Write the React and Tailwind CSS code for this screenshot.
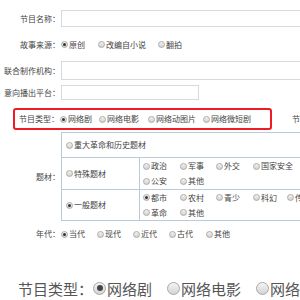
import React from "react";

function Radio({ checked, big }) {
  if (big) {
    return (
      <span className="inline-flex items-center justify-center w-[13px] h-[13px] rounded-full border border-[#a8a8a8] bg-gradient-to-b from-[#f4f4f4] to-[#d4d4d4] shrink-0">
        {checked && <span className="w-[6px] h-[6px] rounded-full bg-[#444]" />}
      </span>
    );
  }
  return (
    <span className="inline-flex items-center justify-center w-[7px] h-[7px] rounded-full border border-[#aaa] bg-gradient-to-b from-[#f2f2f2] to-[#d2d2d2] shrink-0">
      {checked && <span className="w-[3px] h-[3px] rounded-full bg-[#333]" />}
    </span>
  );
}

function Opt({ label, checked, w }) {
  return (
    <div className={`flex items-center gap-[1px] shrink-0 ${w}`}>
      <Radio checked={checked} />
      <span>{label}</span>
    </div>
  );
}

export default function App() {
  return (
    <div
      className="w-[300px] h-[300px] overflow-hidden bg-white text-[8px] leading-none text-[#444]"
      style={{ fontFamily: '"Noto Sans CJK SC", "Noto Sans", sans-serif' }}
    >
      {/* 节目名称 */}
      <div className="flex items-center mt-[10px] h-[17px]">
        <div className="w-[61px] shrink-0 text-right pr-[1px]">节目名称：</div>
        <div className="w-[260px] h-[17px] shrink-0 border border-[#d6dadf] bg-white" />
      </div>

      {/* 故事来源 */}
      <div className="flex items-center mt-[9px] h-[17px]">
        <div className="w-[61px] shrink-0 text-right pr-[1px]">故事来源：</div>
        <Opt label="原创" checked w="w-[37px]" />
        <Opt label="改编自小说" w="w-[60px]" />
        <Opt label="翻拍" w="w-[30px]" />
      </div>

      {/* 联合制作机构 */}
      <div className="flex items-center mt-[8px] h-[19px]">
        <div className="w-[61px] shrink-0 text-right pr-[1px]">联合制作机构：</div>
        <div className="w-[260px] h-[19px] shrink-0 border border-[#d6dadf] bg-white" />
      </div>

      {/* 意向播出平台 */}
      <div className="flex items-center mt-[5px] h-[15px]">
        <div className="w-[61px] shrink-0 text-right pr-[1px]">意向播出平台：</div>
        <div className="w-[138px] h-[15px] shrink-0 border border-[#d6dadf] bg-white" />
      </div>

      {/* 节目类型 (highlighted) */}
      <div className="flex items-center mt-[8px] h-[22px]">
        <div className="ml-[13px] w-[259px] h-[22px] shrink-0 flex items-center border-[2.5px] border-[#ee1c24] rounded-[3px]">
          <div className="w-[45px] shrink-0 text-right pr-[1px]">节目类型：</div>
          <Opt label="网络剧" checked w="w-[39px]" />
          <Opt label="网络电影" w="w-[49px]" />
          <Opt label="网络动图片" w="w-[55px]" />
          <Opt label="网络微短剧" w="w-[50px]" />
        </div>
        <div className="ml-[20px] shrink-0">节目</div>
      </div>

      {/* 题材 */}
      <div className="flex items-center mt-[2px]">
        <div className="w-[61px] shrink-0 text-right pr-[1px]">题材：</div>
        <div className="w-[260px] shrink-0 border border-[#b9cadb]">
          <div className="h-[25px] flex items-center pl-[4px] border-b border-[#b9cadb]">
            <Opt label="重大革命和历史题材" w="w-[90px]" />
          </div>
          <div className="h-[32px] flex border-b border-[#b9cadb]">
            <div className="w-[78px] shrink-0 flex items-center pl-[4px] border-r border-[#b9cadb]">
              <Opt label="特殊题材" w="w-[60px]" />
            </div>
            <div className="flex flex-col justify-center gap-[7px] pl-[3px]">
              <div className="flex">
                <Opt label="政治" w="w-[37px]" />
                <Opt label="军事" w="w-[36px]" />
                <Opt label="外交" w="w-[37px]" />
                <Opt label="国家安全" w="w-[50px]" />
              </div>
              <div className="flex">
                <Opt label="公安" w="w-[37px]" />
                <Opt label="其他" w="w-[36px]" />
              </div>
            </div>
          </div>
          <div className="h-[30px] flex">
            <div className="w-[78px] shrink-0 flex items-center pl-[4px] border-r border-[#b9cadb]">
              <Opt label="一般题材" checked w="w-[60px]" />
            </div>
            <div className="flex flex-col justify-center gap-[7px] pl-[3px]">
              <div className="flex">
                <Opt label="都市" checked w="w-[37px]" />
                <Opt label="农村" w="w-[36px]" />
                <Opt label="青少" w="w-[37px]" />
                <Opt label="科幻" w="w-[34px]" />
                <Opt label="传奇" w="w-[30px]" />
              </div>
              <div className="flex">
                <Opt label="革命" w="w-[37px]" />
                <Opt label="其他" w="w-[36px]" />
              </div>
            </div>
          </div>
        </div>
      </div>

      {/* 年代 */}
      <div className="flex items-center mt-[5px] h-[16px]">
        <div className="w-[61px] shrink-0 text-right pr-[1px]">年代：</div>
        <Opt label="当代" checked w="w-[36px]" />
        <Opt label="现代" w="w-[36px]" />
        <Opt label="近代" w="w-[36px]" />
        <Opt label="古代" w="w-[37px]" />
        <Opt label="其他" w="w-[30px]" />
      </div>

      {/* enlarged 节目类型 */}
      <div className="flex items-center mt-[36px] h-[20px] pl-[18px] text-[15px] text-[#555]">
        <div className="w-[75px] shrink-0">节目类型：</div>
        <div className="flex items-center gap-[1px] w-[74px] shrink-0">
          <Radio checked big />
          <span>网络剧</span>
        </div>
        <div className="flex items-center gap-[1px] w-[89px] shrink-0">
          <Radio big />
          <span>网络电影</span>
        </div>
        <div className="flex items-center gap-[1px] w-[90px] shrink-0">
          <Radio big />
          <span>网络动图片</span>
        </div>
      </div>
    </div>
  );
}
